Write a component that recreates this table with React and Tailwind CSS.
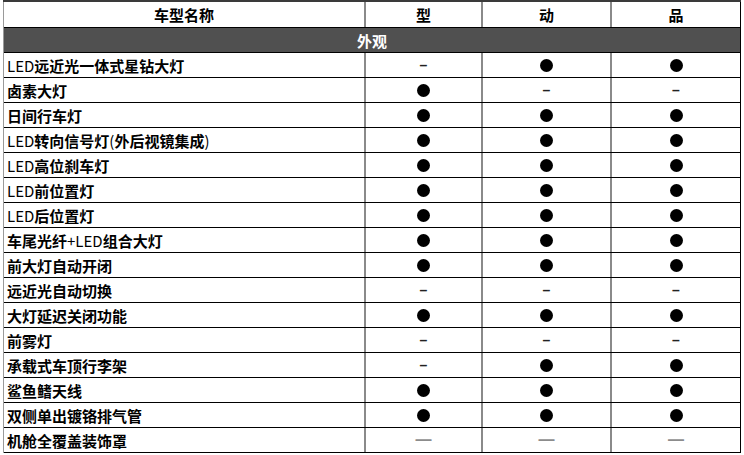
import React from "react";

const F = "●";
const D = "–";
const L = "—";

const rows = [
  ["LED远近光一体式星钻大灯", D, F, F],
  ["卤素大灯", F, D, D],
  ["日间行车灯", F, F, F],
  ["LED转向信号灯(外后视镜集成)", F, F, F],
  ["LED高位刹车灯", F, F, F],
  ["LED前位置灯", F, F, F],
  ["LED后位置灯", F, F, F],
  ["车尾光纤+LED组合大灯", F, F, F],
  ["前大灯自动开闭", F, F, F],
  ["远近光自动切换", D, D, D],
  ["大灯延迟关闭功能", F, F, F],
  ["前雾灯", D, D, D],
  ["承载式车顶行李架", D, F, F],
  ["鲨鱼鳍天线", F, F, F],
  ["双侧单出镀铬排气管", F, F, F],
  ["机舱全覆盖装饰罩", L, L, L],
];

function Label({ text }) {
  const parts = text.split(/([A-Za-z()+]+)/).filter(Boolean);
  return (
    <>
      {parts.map((p, i) =>
        /^[A-Za-z()+]+$/.test(p) ? (
          <span key={i} className="font-normal">{p}</span>
        ) : (
          <span key={i}>{p}</span>
        )
      )}
    </>
  );
}

function Mark({ v }) {
  if (v === F) return <div className="w-[13px] h-[13px] rounded-full bg-black" />;
  if (v === D)
    return (
      <span
        className="text-[14px] leading-none text-[#222] font-bold"
        style={{ fontFamily: '"Liberation Sans", sans-serif' }}
      >
        –
      </span>
    );
  return (
    <span
      className="text-[16px] leading-none text-[#8c8c8c] font-bold"
      style={{ fontFamily: '"Liberation Sans", sans-serif' }}
    >
      —
    </span>
  );
}

export default function App() {
  return (
    <div
      className="w-[744px] h-[455px] bg-white overflow-hidden text-black"
      style={{ fontFamily: '"Noto Sans CJK SC", "Noto Sans", sans-serif' }}
    >
      <div className="ml-[3px] w-[738px]">
        <div className="h-[2px] bg-[#3a3a3a]" />
        <div className="border-l border-[#9a9a9a] border-r border-r-black">
          <div className="flex h-[26px] border-b border-black text-[15px] font-bold leading-none">
            <div className="w-[362px] flex items-center justify-center border-r-2 border-[#8a8a8a]">车型名称</div>
            <div className="w-[117px] flex items-center justify-center border-r-2 border-[#8a8a8a]">型</div>
            <div className="w-[129px] flex items-center justify-center border-r-2 border-[#8a8a8a]">动</div>
            <div className="flex-1 flex items-center justify-center">品</div>
          </div>
          <div className="h-[25px] bg-[#505050] border-b border-black flex items-center justify-center text-white text-[15px] font-bold leading-none">
            外观
          </div>
          {rows.map((r, i) => (
            <div key={i} className="flex h-[25px] border-b border-black text-[15px] font-semibold leading-none">
              <div className="w-[362px] flex items-center pl-[3px] border-r-2 border-[#8a8a8a] whitespace-nowrap">
                <Label text={r[0]} />
              </div>
              <div className="w-[117px] flex items-center justify-center border-r-2 border-[#8a8a8a]"><Mark v={r[1]} /></div>
              <div className="w-[129px] flex items-center justify-center border-r-2 border-[#8a8a8a]"><Mark v={r[2]} /></div>
              <div className="flex-1 flex items-center justify-center"><Mark v={r[3]} /></div>
            </div>
          ))}
        </div>
      </div>
    </div>
  );
}
